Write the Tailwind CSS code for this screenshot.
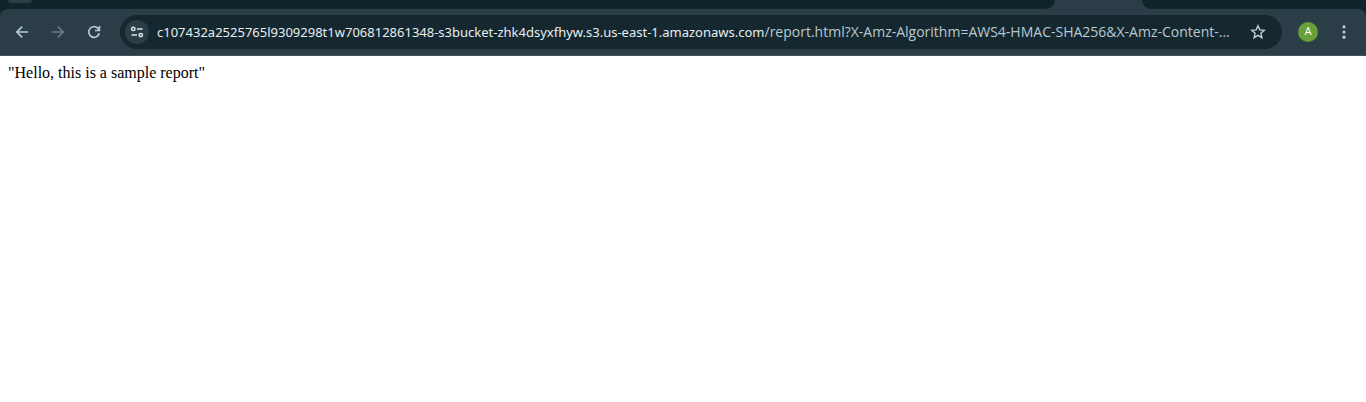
<!DOCTYPE html>
<html lang="en">
<head>
<meta charset="utf-8">
<meta name="viewport" content="width=device-width, initial-scale=1">
<title>report.html</title>
<script src="https://cdn.jsdelivr.net/npm/@tailwindcss/browser@4"></script>
</head>
<body class="min-h-screen bg-white">
<header class="bg-[#10242c]">
  <!-- lower edge of the tab strip; the gap is the active tab -->
  <div class="flex h-[9px] bg-[#2b3e47]" aria-hidden="true">
    <div class="flex flex-1 items-start rounded-br-[9px] bg-[#10242c] pl-2"><div class="h-[3px] w-6 rounded-b-xl bg-[#2b3e47]"></div></div>
    <div class="w-[87px]"></div>
    <div class="w-56 rounded-bl-[9px] bg-[#10242c]"></div>
  </div>
  <div class="flex h-[47px] items-center rounded-t-lg border-b border-[#40525a] bg-[#2b3e47] px-2">
    <nav class="flex gap-2" aria-label="History">
      <button aria-label="Back" class="grid size-7 place-items-center text-[#b8cbd4]">
        <svg class="size-4" viewBox="0 0 16 16" fill="none" stroke="currentColor" stroke-width="1.7"><path d="M14 8H3M8.2 2.6 2.8 8l5.4 5.4"/></svg>
      </button>
      <button aria-label="Forward" disabled class="grid size-7 place-items-center text-[#6b7c85]">
        <svg class="size-4" viewBox="0 0 16 16" fill="none" stroke="currentColor" stroke-width="1.7"><path d="M2 8h11M7.8 2.6 13.2 8l-5.4 5.4"/></svg>
      </button>
      <button aria-label="Reload" class="grid size-7 place-items-center text-[#b8cbd4]">
        <svg class="size-4" viewBox="0 0 16 16" fill="none" stroke="currentColor" stroke-width="1.7"><path d="M13.2 9.2A5.3 5.3 0 1 1 11.7 4.2L13.1 5.6M13.4 2v4.5H9"/></svg>
      </button>
    </nav>
    <form class="ml-3 flex h-[34px] min-w-0 flex-1 items-center rounded-full bg-[#152830] pr-2.5 pl-[5px]">
      <button type="button" aria-label="View site information" class="grid size-6 shrink-0 place-items-center rounded-full bg-[#2b3e47] text-[#e1e5e7]">
        <svg class="size-4" viewBox="0 0 16 16" fill="none" stroke="currentColor" stroke-width="1.5"><circle cx="4.3" cy="4.9" r="1.7"/><path d="M8 4.9h5.5M2.5 11.1H8"/><circle cx="11.8" cy="11.1" r="1.7"/></svg>
      </button>
      <div class="mr-3 ml-2 flex min-w-0 flex-1 items-baseline font-['Noto_Sans',sans-serif]">
        <input aria-label="Host" type="text" value="c107432a2525765l9309298t1w706812861348-s3bucket-zhk4dsyxfhyw.s3.us-east-1.amazonaws.com" class="field-sizing-content h-6 min-w-0 text-[13px] text-[#e8edef] outline-none">
        <input aria-label="Path and query" type="text" value="/report.html?X-Amz-Algorithm=AWS4-HMAC-SHA256&amp;X-Amz-Content-..." class="h-6 min-w-0 flex-1 overflow-hidden font-['Open_Sans',sans-serif] text-sm text-ellipsis text-[#b9c8d0] outline-none">
      </div>
      <button type="button" aria-label="Bookmark this tab" class="grid size-7 shrink-0 place-items-center text-[#c3cdd1]">
        <svg class="size-4" viewBox="0 0 16 16" fill="none" stroke="currentColor" stroke-width="1.4"><path d="m8 1.8 1.8 4.1 4.4.4-3.3 3 1 4.4L8 11.4l-3.9 2.3 1-4.4-3.3-3 4.4-.4z"/></svg>
      </button>
    </form>
    <button aria-label="Profile" class="ml-4 grid size-5 place-items-center rounded-full bg-[#689f38] font-[Roboto,sans-serif] text-[11px] text-white">A</button>
    <button aria-label="Menu" class="ml-3 grid size-7 place-items-center text-[#b8cbd4]">
      <svg class="size-4" viewBox="0 0 16 16" fill="currentColor"><circle cx="8" cy="2.8" r="1.6"/><circle cx="8" cy="8" r="1.6"/><circle cx="8" cy="13.2" r="1.6"/></svg>
    </button>
  </div>
</header>
<main class="p-2 font-['Liberation_Serif',serif] text-base leading-[18px] text-black">"Hello, this is a sample report"</main>
</body>
</html>
